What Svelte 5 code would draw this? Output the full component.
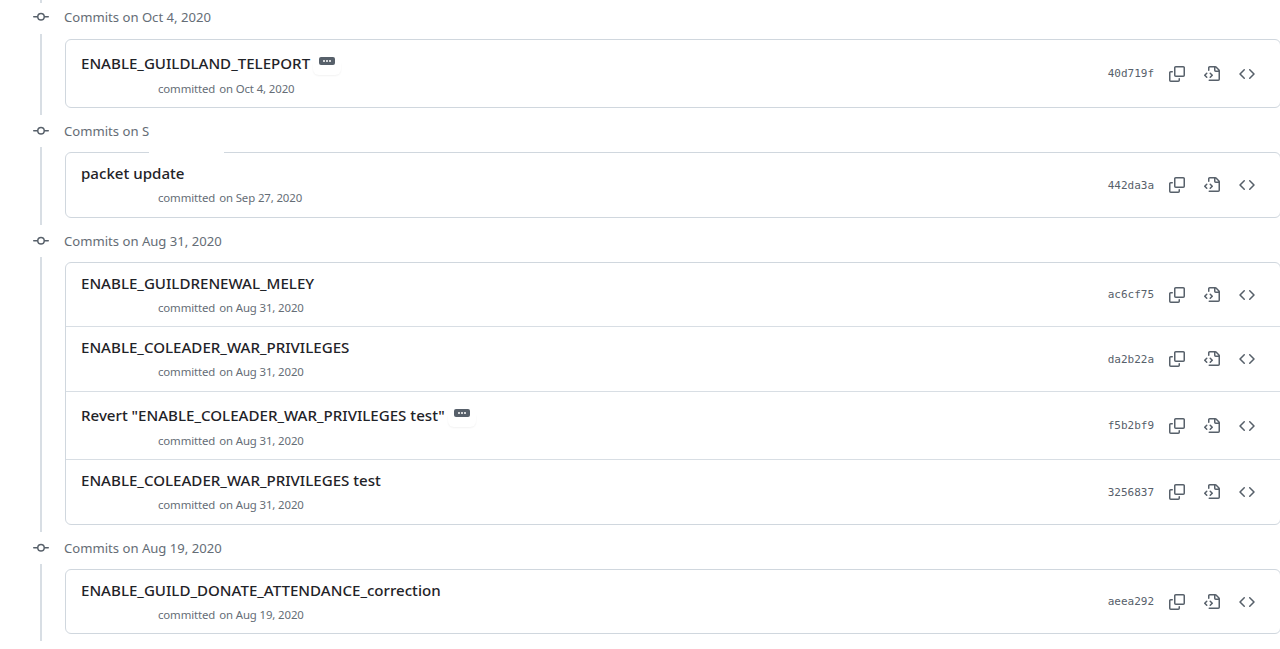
<script>
  const groups = [
    { date: 'Oct 4, 2020', commits: [
      { title: 'ENABLE_GUILDLAND_TELEPORT', date: 'Oct 4, 2020', hash: '40d719f', more: true }
    ]},
    { date: '', label: 'Commits on S', notch: true, commits: [
      { title: 'packet update', date: 'Sep 27, 2020', hash: '442da3a' }
    ]},
    { date: 'Aug 31, 2020', commits: [
      { title: 'ENABLE_GUILDRENEWAL_MELEY', date: 'Aug 31, 2020', hash: 'ac6cf75' },
      { title: 'ENABLE_COLEADER_WAR_PRIVILEGES', date: 'Aug 31, 2020', hash: 'da2b22a' },
      { title: 'Revert "ENABLE_COLEADER_WAR_PRIVILEGES test"', date: 'Aug 31, 2020', hash: 'f5b2bf9', more: true },
      { title: 'ENABLE_COLEADER_WAR_PRIVILEGES test', date: 'Aug 31, 2020', hash: '3256837' }
    ]},
    { date: 'Aug 19, 2020', commits: [
      { title: 'ENABLE_GUILD_DONATE_ATTENDANCE_correction', date: 'Aug 19, 2020', hash: 'aeea292' }
    ]}
  ];
</script>

<div class="timeline">
  <div class="stub"></div>
  {#each groups as g, i}
    <section class="group" class:first={i === 0}>
      <h3 class="head">
        <svg class="commit-icon" width="16" height="16" viewBox="0 0 16 16"><path d="M11.93 8.5a4.002 4.002 0 0 1-7.86 0H.75a.75.75 0 0 1 0-1.5h3.32a4.002 4.002 0 0 1 7.86 0h3.32a.75.75 0 0 1 0 1.5Zm-1.43-.75a2.5 2.5 0 1 0-5 0 2.5 2.5 0 0 0 5 0Z"/></svg>
        <span>{g.label ?? `Commits on ${g.date}`}</span>
      </h3>
      <div class="body">
        <ol class="card">
          {#if g.notch}<li class="notch" aria-hidden="true"></li>{/if}
          {#each g.commits as c}
            <li class="row" class:tall={c.more}>
              <div class="info">
                <div class="title">
                  <span>{c.title}</span>
                  {#if c.more}
                    <span class="more">
                      <svg width="10" height="4" viewBox="0 0 10 4"><circle cx="2" cy="2" r="1"/><circle cx="5" cy="2" r="1"/><circle cx="8" cy="2" r="1"/></svg>
                    </span>
                  {/if}
                </div>
                <div class="meta"><span>committed</span><span>on {c.date}</span></div>
              </div>
              <div class="actions">
                <code>{c.hash}</code>
                <svg class="ic copy" width="16" height="16" viewBox="0 0 16 16"><path d="M0 6.75C0 5.784.784 5 1.75 5h1.5a.75.75 0 0 1 0 1.5h-1.5a.25.25 0 0 0-.25.25v7.5c0 .138.112.25.25.25h7.5a.25.25 0 0 0 .25-.25v-1.5a.75.75 0 0 1 1.5 0v1.5A1.75 1.75 0 0 1 9.25 16h-7.5A1.75 1.75 0 0 1 0 14.25Z"/><path d="M5 1.75C5 .784 5.784 0 6.75 0h7.5C15.216 0 16 .784 16 1.75v7.5A1.75 1.75 0 0 1 14.25 11h-7.5A1.75 1.75 0 0 1 5 9.25Zm1.75-.25a.25.25 0 0 0-.25.25v7.5c0 .138.112.25.25.25h7.5a.25.25 0 0 0 .25-.25v-7.5a.25.25 0 0 0-.25-.25Z"/></svg>
                <svg class="ic file" width="16" height="16" viewBox="0 0 16 16"><path d="M4 1.75C4 .784 4.784 0 5.75 0h5.586c.464 0 .909.184 1.237.513l2.914 2.914c.329.328.513.773.513 1.237v8.586A1.75 1.75 0 0 1 14.25 15h-9a.75.75 0 0 1 0-1.5h9a.25.25 0 0 0 .25-.25V6h-2.75A1.75 1.75 0 0 1 10 4.25V1.5H5.75a.25.25 0 0 0-.25.25v2.5a.75.75 0 0 1-1.5 0Zm1.72 4.97a.75.75 0 0 1 1.06 0l2 2a.75.75 0 0 1 0 1.06l-2 2a.749.749 0 0 1-1.275-.326.749.749 0 0 1 .215-.734l1.47-1.47-1.47-1.47a.75.75 0 0 1 0-1.06ZM3.28 7.78 1.81 9.25l1.47 1.47a.751.751 0 0 1-.018 1.042.751.751 0 0 1-1.042.018l-2-2a.75.75 0 0 1 0-1.06l2-2a.751.751 0 0 1 1.042.018.751.751 0 0 1 .018 1.042Zm8.22-6.218V4.25c0 .138.112.25.25.25h2.688l-.011-.013-2.914-2.914-.013-.011Z"/></svg>
                <svg class="ic code" width="16" height="16" viewBox="0 0 16 16"><path d="m11.28 3.22 4.25 4.25a.75.75 0 0 1 0 1.06l-4.25 4.25a.749.749 0 0 1-1.275-.326.749.749 0 0 1 .215-.734L13.94 8l-3.72-3.72a.749.749 0 0 1 .326-1.275.749.749 0 0 1 .734.215Zm-6.56 0a.751.751 0 0 1 1.042.018.751.751 0 0 1 .018 1.042L2.06 8l3.72 3.72a.749.749 0 0 1-.326 1.275.749.749 0 0 1-.734-.215L.47 8.53a.75.75 0 0 1 0-1.06Z"/></svg>
              </div>
            </li>
          {/each}
        </ol>
      </div>
    </section>
  {/each}
</div>

<style>
  :global(body) {
    margin: 0;
    background: #fff;
    overflow: hidden;
  }
  .timeline {
    font-family: "Noto Sans", "Open Sans", sans-serif;
    color: #1f2328;
    width: 1281px;
    height: 649px;
    overflow: hidden;
  }
  .stub {
    width: 2px;
    height: 3px;
    margin-left: 40px;
    background: #d8dee4;
  }
  .head {
    display: flex;
    align-items: center;
    gap: 15px;
    height: 32px;
    margin: 0 0 0 33px;
    font-size: 13.1px;
    font-weight: 400;
    color: #656d76;
  }
  .first .head {
    height: 28px;
    padding-bottom: 3px;
  }
  .commit-icon {
    fill: #57606a;
    flex: none;
  }
  .body {
    margin-left: 40px;
    padding: 5px 0 7px 23px;
    border-left: 2px solid #d8dee4;
  }
  .card {
    position: relative;
    list-style: none;
    margin: 0;
    padding: 0;
    border: 1px solid #d0d7de;
    border-radius: 6px;
    background: #fff;
  }
  .notch {
    position: absolute;
    left: 83px;
    top: -1px;
    width: 75px;
    height: 1px;
    background: #fff;
  }
  .row {
    display: flex;
    align-items: center;
    justify-content: space-between;
    height: 64px;
    padding: 0 15px;
    border-top: 1px solid #d8dee4;
  }
  .row:first-of-type {
    height: 63px;
    border-top: 0;
  }
  .notch + .row {
    height: 64px;
    border-top: 0;
  }
  .row.tall {
    height: 67px;
  }
  .info {
    display: flex;
    flex-direction: column;
    gap: 6px;
  }
  .tall .info {
    gap: 7px;
    margin-top: 4px;
  }
  .title {
    display: flex;
    align-items: flex-start;
    font-size: 15.1px;
    font-weight: 500;
    line-height: 20px;
    color: #1f2328;
  }
  .more {
    position: relative;
    display: flex;
    align-items: center;
    justify-content: center;
    width: 16px;
    height: 8.5px;
    margin-left: 9px;
    margin-top: 3.5px;
    border-radius: 2px;
    background: #57606a;
  }
  .more::after {
    content: "";
    position: absolute;
    left: -6px;
    top: 6px;
    width: 28px;
    height: 12px;
    border-radius: 0 0 6px 6px;
    box-shadow: 0 1px 2px rgba(31, 35, 40, 0.06);
  }
  .more svg {
    fill: #fff;
  }
  .meta {
    display: flex;
    gap: 4px;
    margin-left: 77px;
    font-size: 11.4px;
    letter-spacing: -0.12px;
    line-height: 18px;
    color: #656d76;
  }
  .actions {
    display: flex;
    align-items: center;
    margin-right: 10px;
  }
  code {
    font-family: "DejaVu Sans Mono", monospace;
    font-size: 11px;
    color: #57606a;
    margin-right: 15px;
  }
  .ic {
    fill: #57606a;
    flex: none;
  }
  .file {
    margin-left: 19px;
  }
  .code {
    margin-left: 19px;
  }
</style>
